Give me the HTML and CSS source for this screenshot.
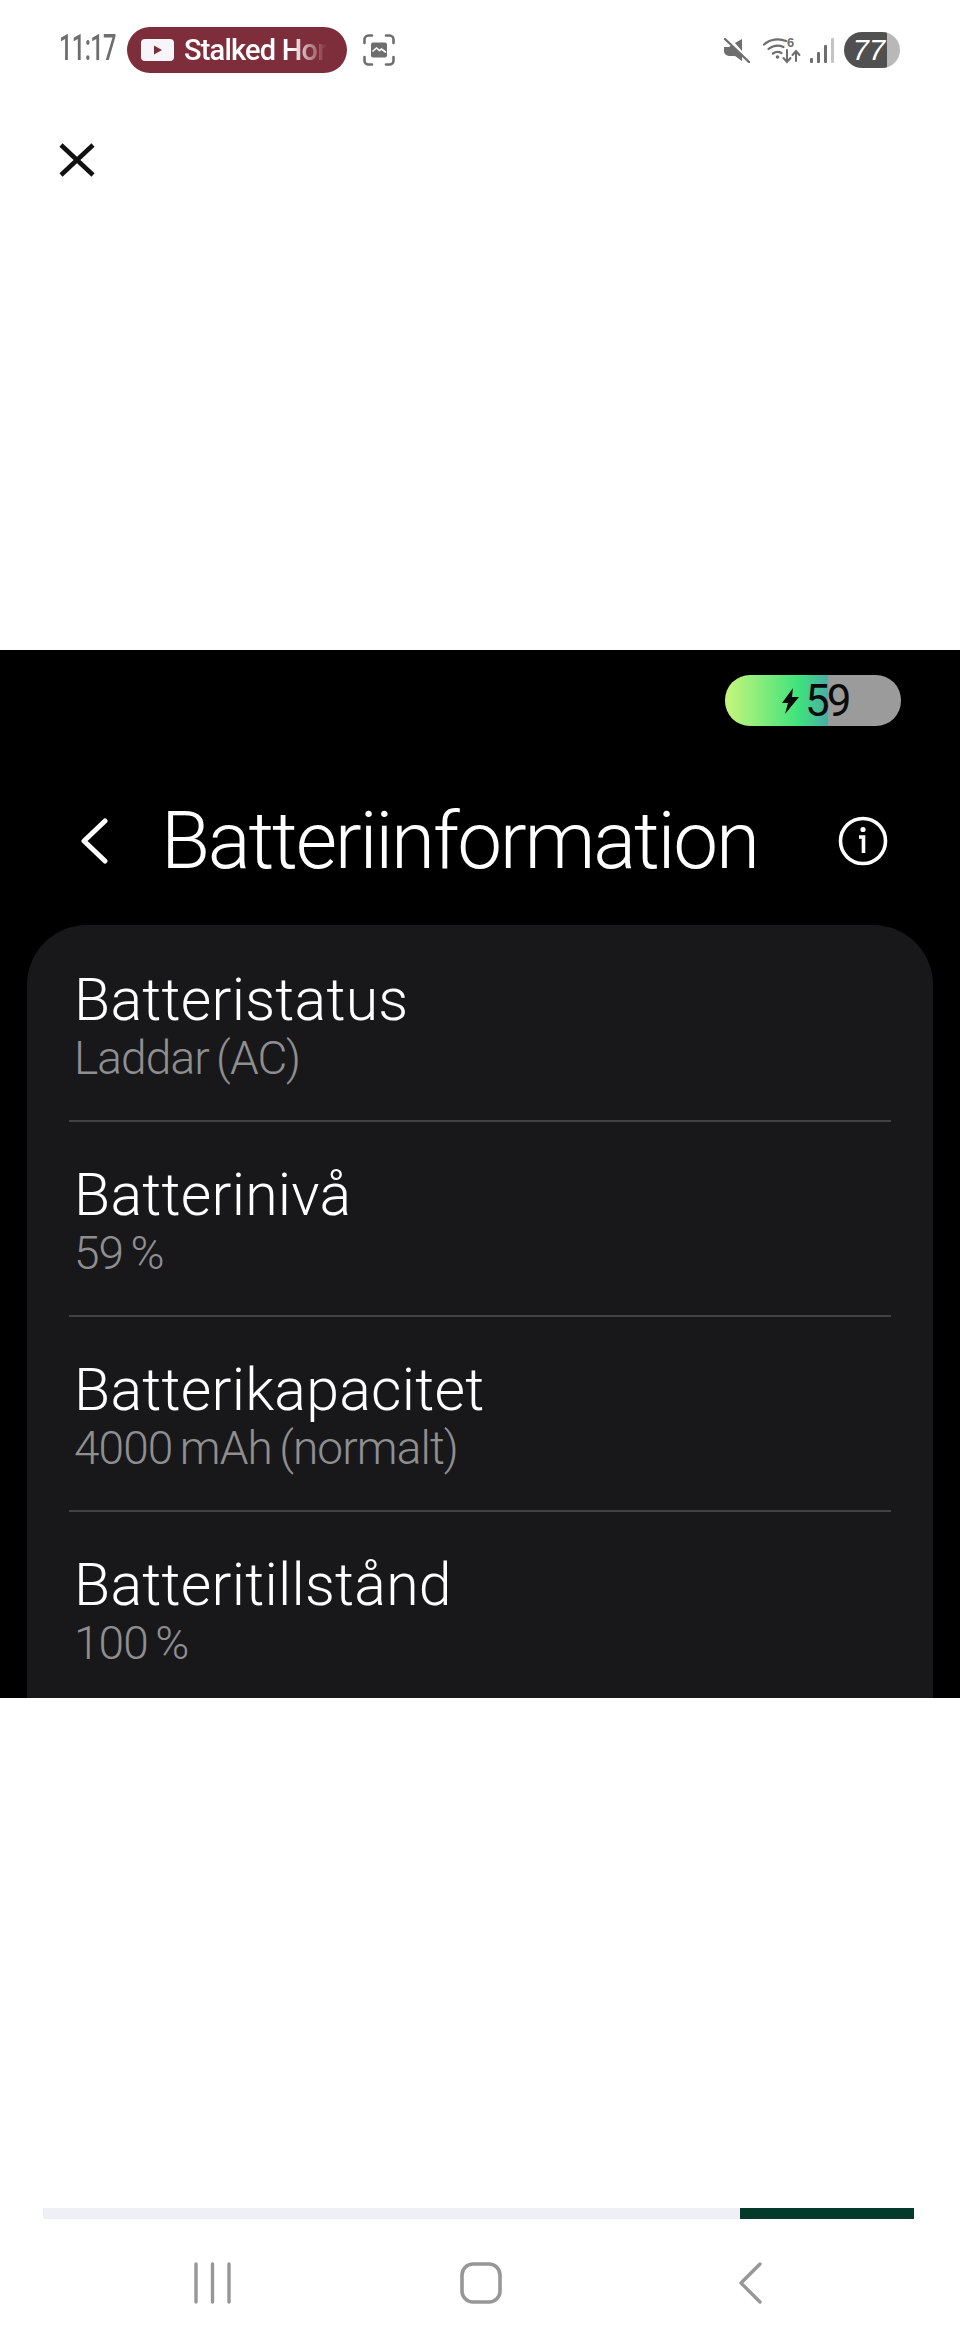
FILE: index.html
```html
<!DOCTYPE html>
<html lang="sv">
<head>
    <meta charset="UTF-8">
    <title>Batteriinformation</title>
    <link rel="stylesheet" href="styles.css">
</head>
<body>
    <div class="screen">
        <div class="status-bar">
            <div class="clock-slot"><span class="clock">11:17</span></div>
            <div class="media-pill">
                <svg class="yt-icon" viewBox="0 0 33 22"><rect width="33" height="22" rx="4" fill="#f8f5fa"/><path d="M13 6.5l8 4.5-8 4.5z" fill="#7e2d3a"/></svg>
                <span class="media-title">Stalked Hor</span>
            </div>
            <svg class="shot-icon" viewBox="0 0 32 32" fill="none" stroke="#6e6e6e" stroke-width="2.6" stroke-linecap="round">
                <path d="M1.5 9V5.500a4 4 0 0 1 4-4H9M23 1.500h3.500a4 4 0 0 1 4 4V9M30.500 23v3.500a4 4 0 0 1-4 4H23M9 30.500H5.500a4 4 0 0 1-4-4V23"/>
                <path d="M8 10.500a2 2 0 0 1 2-2h12a2 2 0 0 1 2 2v11a2 2 0 0 1-2 2H10a2 2 0 0 1-2-2z" fill="#6e6e6e" stroke="none"/>
                <path d="M10 17l3.500-3 3 2.500 2-1.500 4 3" stroke="#fff" stroke-width="1.600"/>
            </svg>
            <div class="status-right">
                <svg class="mute-icon" viewBox="0 0 27 25"><path d="M1 9h5l3-2 10 11v5l-7-5H6a5 5 0 0 1-5-5zM12 5l7-4v12z" fill="#6e6e6e"/><path d="M2 1l24 23" stroke="#6e6e6e" stroke-width="2.400" stroke-linecap="round"/></svg>
                <svg class="wifi-icon" viewBox="0 0 38 28" fill="none" stroke="#6e6e6e" stroke-width="2.200" stroke-linecap="round">
                    <path d="M1 8.500C7 3 16 2 23 5M5.500 13C10 9.500 16 9 20.500 11M10 17.500c2.500-1.800 6-2 8.500-.5"/>
                    <circle cx="14.500" cy="21" r="1.800" fill="#6e6e6e" stroke="none"/>
                    <path d="M24 14v11M20.500 22l3.500 4 3.500-4M33 25V15M29.500 19l3.500-4 3.500 4" stroke-width="2"/>
                    <text class="wifi-six" x="24" y="11">6</text>
                </svg>
                <svg class="signal-icon" viewBox="0 0 24 25"><rect x="0" y="20" width="3" height="5" rx="1" fill="#6e6e6e"/><rect x="7" y="14" width="3" height="11" rx="1" fill="#6e6e6e"/><rect x="14" y="7" width="3" height="18" rx="1" fill="#6e6e6e"/><rect x="21" y="0" width="3" height="25" rx="1" fill="#c4c4c4"/></svg>
                <div class="level-pill"><span>77</span></div>
            </div>
        </div>

        <div class="close-row">
            <svg class="close-icon" viewBox="0 0 36 34"><path d="M2 2l32 30M34 2L2 32" stroke="#111" stroke-width="4.500"/></svg>
        </div>

        <main class="panel">
            <div class="charge-row">
                <div class="charge-pill">
                    <svg class="bolt" viewBox="0 0 17 26"><path d="M11 0L0 15h6L3 26 17 9h-7z" fill="#0b0b0b"/></svg>
                    <span>59</span>
                </div>
            </div>

            <div class="app-bar">
                <svg class="back-icon" viewBox="0 0 28 46"><path d="M25 3L4 23l21 20" fill="none" stroke="#fff" stroke-width="5" stroke-linecap="round" stroke-linejoin="round"/></svg>
                <h1>Batteriinformation</h1>
                <svg class="info-icon" viewBox="0 0 50 50" fill="none" stroke="#fff"><circle cx="25" cy="25" r="22.500" stroke-width="3.600"/><path d="M21 21h4.500v16" stroke-width="3.600"/><circle cx="25" cy="13.500" r="2.600" fill="#fff" stroke="none"/></svg>
            </div>

            <section class="card">
                <div class="info-row">
                    <div class="row-title">Batteristatus</div>
                    <div class="row-value">Laddar (AC)</div>
                </div>
                <div class="info-row">
                    <div class="row-title">Batterinivå</div>
                    <div class="row-value">59 %</div>
                </div>
                <div class="info-row">
                    <div class="row-title">Batterikapacitet</div>
                    <div class="row-value">4000 mAh (normalt)</div>
                </div>
                <div class="info-row">
                    <div class="row-title">Batteritillstånd</div>
                    <div class="row-value">100 %</div>
                </div>
            </section>
        </main>

        <div class="progress">
            <div class="progress-fill"></div>
        </div>

        <nav class="nav-bar">
            <svg class="nav-recents" viewBox="0 0 37 42" stroke="#979797" stroke-width="3.400" stroke-linecap="round"><path d="M2 2v38M18.500 2v38M35 2v38"/></svg>
            <svg class="nav-home" viewBox="0 0 42 42" fill="none" stroke="#979797" stroke-width="3.600"><rect x="2" y="2" width="38" height="38" rx="11"/></svg>
            <svg class="nav-back" viewBox="0 0 23 42" fill="none" stroke="#979797" stroke-width="3.400" stroke-linecap="round" stroke-linejoin="round"><path d="M21 2L2 21l19 19"/></svg>
        </nav>
    </div>
</body>
</html>
```

FILE: styles.css
```css
:root {
    --hand-font: "Roboto", "Liberation Sans", sans-serif;
    --status-grey: #6e6e6e;
    --card-color: #18181b;
    --value-color: #8f8f92;
}

* {
    box-sizing: border-box;
}

body {
    margin: 0;
    background: #fff;
    font-family: var(--hand-font);
}

.screen {
    width: 960px;
    height: 2347px;
    overflow: hidden;
    display: flex;
    flex-direction: column;
}

/* Statusrad */
.status-bar {
    height: 100px;
    padding: 0 60px 0 59px;
    display: flex;
    align-items: center;
}

.clock-slot {
    width: 68px;
    margin-top: -6px;
}

.clock {
    display: inline-block;
    font-size: 37px;
    font-weight: 500;
    letter-spacing: -1px;
    color: var(--status-grey);
    transform: scaleX(0.64);
    transform-origin: left center;
}

.media-pill {
    width: 220px;
    height: 46px;
    padding-left: 14px;
    border-radius: 23px;
    background: #7e2d3a;
    display: flex;
    align-items: center;
    gap: 10px;
}

.yt-icon {
    width: 33px;
    height: 22px;
    flex: none;
}

.media-title {
    white-space: nowrap;
    font-size: 29px;
    font-weight: 500;
    letter-spacing: -0.8px;
    color: #fff;
    -webkit-mask-image: linear-gradient(to right, #000 75%, transparent 100%);
    mask-image: linear-gradient(to right, #000 75%, transparent 100%);
}

.shot-icon {
    width: 32px;
    height: 32px;
    margin-left: 16px;
}

.status-right {
    margin-left: auto;
    display: flex;
    align-items: center;
}

.mute-icon {
    width: 27px;
    height: 25px;
    margin-right: 13px;
}

.wifi-icon {
    width: 38px;
    height: 28px;
    margin-right: 9px;
}

.wifi-six {
    font-family: "Liberation Sans", sans-serif;
    font-size: 13px;
    font-weight: 700;
    fill: var(--status-grey);
    stroke: none;
}

.signal-icon {
    width: 24px;
    height: 25px;
    margin-right: 10px;
}

.level-pill {
    width: 56px;
    height: 36px;
    border-radius: 18px;
    background: linear-gradient(to right, #505050 77%, #b8b8b8 77%);
    display: flex;
    align-items: center;
    justify-content: center;
    padding-right: 6px;
    color: #fff;
    font-family: "Liberation Sans", sans-serif;
    font-size: 29px;
    font-style: italic;
}

.close-row {
    height: 77px;
    padding: 43px 0 0 59px;
}

.close-icon {
    display: block;
    width: 36px;
    height: 34px;
}

/* Mörk panel */
.panel {
    height: 1048px;
    margin-top: 473px;
    background: #000;
    overflow: hidden;
}

.charge-row {
    padding: 25px 59px 0 0;
    display: flex;
    justify-content: flex-end;
}

.charge-pill {
    width: 176px;
    height: 51px;
    border-radius: 25px;
    background: linear-gradient(to right, #c8f67c 0%, #3fe27c 42%, #4aaea6 58%, #4aaea6 58.500%, #9b9b9b 58.500%);
    display: flex;
    align-items: center;
    padding-left: 57px;
    gap: 6px;
    color: #0b0b0b;
    font-size: 44px;
    letter-spacing: -3px;
}

.bolt {
    width: 17px;
    height: 26px;
}

.app-bar {
    height: 199px;
    padding: 30px 72px 0 80px;
    display: flex;
    align-items: center;
}

.back-icon {
    width: 28px;
    height: 46px;
}

.app-bar h1 {
    margin: 0 0 0 53px;
    font-size: 80px;
    line-height: 90px;
    font-weight: 300;
    letter-spacing: -2.2px;
    color: #fff;
    white-space: nowrap;
}

.info-icon {
    width: 50px;
    height: 50px;
    margin-left: auto;
}

.card {
    height: 773px;
    margin: 0 27px;
    padding: 2px 42px 0;
    border-radius: 60px 60px 0 0;
    background: var(--card-color);
    overflow: hidden;
}

.info-row {
    height: 195px;
    padding: 39px 0 0 5px;
    border-bottom: 2px solid #424245;
}

.info-row:last-child {
    border-bottom: none;
}

.row-title {
    font-size: 59px;
    line-height: 68px;
    font-weight: 300;
    letter-spacing: 0.25px;
    color: #fff;
    white-space: nowrap;
}

.row-value {
    font-size: 46px;
    line-height: 48px;
    font-weight: 300;
    letter-spacing: -0.9px;
    word-spacing: -3px;
    color: var(--value-color);
    white-space: nowrap;
}

/* Nederst */
.progress {
    height: 11px;
    margin: 510px 46px 0 43px;
    background: #eff0f5;
    display: flex;
    justify-content: flex-end;
}

.progress-fill {
    width: 174px;
    background: #043a2a;
}

.nav-bar {
    padding: 43px 198px 0 194px;
    display: flex;
    justify-content: space-between;
}

.nav-recents {
    width: 37px;
    height: 42px;
}

.nav-home {
    width: 42px;
    height: 42px;
    margin-right: 8px;
}

.nav-back {
    width: 23px;
    height: 42px;
}
```
